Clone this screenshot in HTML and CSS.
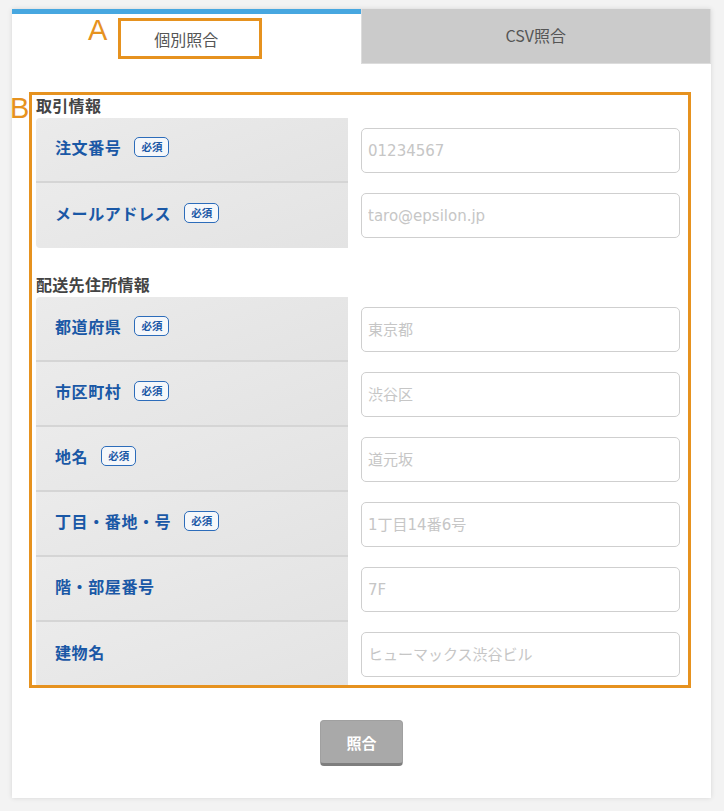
FILE: index.html
```html
<!DOCTYPE html>
<html lang="ja">
<head>
  <meta charset="UTF-8">
  <meta name="viewport" content="width=device-width, initial-scale=1.0">
  <title>照合</title>
  <link rel="stylesheet" href="styles.css">
</head>
<body>
  <div class="card">
    <div class="tabs">
      <div class="tab active">個別照合</div>
      <div class="tab">CSV照合</div>
    </div>

    <div class="content">
      <h2>取引情報</h2>
      <div class="form-table">
        <div class="row">
          <div class="label">注文番号<span class="req">必須</span></div>
          <div class="field"><input type="text" placeholder="01234567"></div>
        </div>
        <div class="row">
          <div class="label">メールアドレス<span class="req">必須</span></div>
          <div class="field"><input type="text" placeholder="taro@epsilon.jp"></div>
        </div>
      </div>

      <h2>配送先住所情報</h2>
      <div class="form-table">
        <div class="row">
          <div class="label">都道府県<span class="req">必須</span></div>
          <div class="field"><input type="text" placeholder="東京都"></div>
        </div>
        <div class="row">
          <div class="label">市区町村<span class="req">必須</span></div>
          <div class="field"><input type="text" placeholder="渋谷区"></div>
        </div>
        <div class="row">
          <div class="label">地名<span class="req">必須</span></div>
          <div class="field"><input type="text" placeholder="道元坂"></div>
        </div>
        <div class="row">
          <div class="label">丁目・番地・号<span class="req">必須</span></div>
          <div class="field"><input type="text" placeholder="1丁目14番6号"></div>
        </div>
        <div class="row">
          <div class="label">階・部屋番号</div>
          <div class="field"><input type="text" placeholder="7F"></div>
        </div>
        <div class="row">
          <div class="label">建物名</div>
          <div class="field"><input type="text" placeholder="ヒューマックス渋谷ビル"></div>
        </div>
      </div>

      <div class="actions">
        <button class="submit">照合</button>
      </div>
    </div>
  </div>

  <!-- annotation marks -->
  <div class="mark mark-a"></div>
  <span class="mark-label label-a">A</span>
  <div class="mark mark-b"></div>
  <span class="mark-label label-b">B</span>
</body>
</html>
```

FILE: styles.css
```css
body {
  margin: 0;
  padding: 9px 12px 13px;
  background: #f3f3f3;
  font-family: "Noto Sans CJK JP", "Noto Sans", sans-serif;
  color: #333;
}
.card {
  width: 699px;
  background: #fff;
  box-shadow: 0 0 5px rgba(0,0,0,0.12);
}
.tabs {
  display: flex;
  height: 55px;
}
.tab {
  flex: 1;
  display: flex;
  align-items: center;
  justify-content: center;
  font-size: 16px;
  color: #555;
  background: #cbcbcb;
  border: 1px solid #dcdcdc;
  border-top: none;
  padding-bottom: 2px;
  box-sizing: border-box;
}
.tab.active {
  background: #fff;
  border: none;
  border-top: 5px solid #47a7e0;
  padding-bottom: 0;
}
.content {
  padding: 0 31px 32px 24px;
}
h2 {
  font-size: 16px;
  line-height: 20px;
  font-weight: bold;
  color: #444;
  letter-spacing: 0.3px;
  margin: 31px 0 3px;
}
.form-table + h2 {
  margin-top: 26px;
}
.form-table {
  display: grid;
  grid-template-columns: 312px 1fr;
}
.row {
  display: contents;
}
.label {
  height: 65px;
  box-sizing: border-box;
  display: flex;
  align-items: center;
  padding: 0 0 6px 19px;
  font-size: 16px;
  font-weight: bold;
  letter-spacing: 0.6px;
  color: #1a58a6;
  background: linear-gradient(160deg, #ebebeb, #e3e3e3);
  border-bottom: 2px solid #d5d5d5;
}
.row:first-child .label {
  border-top-left-radius: 4px;
}
.row:last-child .label {
  border-bottom: none;
  border-bottom-left-radius: 4px;
}
.req {
  display: inline-block;
  margin-left: 13px;
  padding: 2px 6px;
  font-size: 10.5px;
  line-height: 14px;
  letter-spacing: 0;
  color: #1a58a6;
  background: #f5f7fa;
  border: 1.5px solid #2c6cba;
  border-radius: 5px;
}
.field {
  height: 65px;
  display: flex;
  align-items: center;
  padding-left: 13px;
}
.field input {
  width: 100%;
  height: 45px;
  box-sizing: border-box;
  border: 1px solid #cfcfcf;
  border-radius: 5px;
  padding: 0 6px;
  font-family: "DejaVu Sans", "Noto Sans CJK JP", sans-serif;
  font-size: 15px;
  color: #333;
  background: #fff;
}
.field input::placeholder {
  color: #c6c6c6;
}
.actions {
  display: flex;
  justify-content: center;
  margin-top: 33px;
}
.submit {
  width: 83px;
  height: 46px;
  margin-left: 7px;
  background: #a9a9a9;
  color: #fff;
  font-family: "Noto Sans CJK JP", sans-serif;
  font-size: 15px;
  font-weight: bold;
  border: 1px solid #a0a0a0;
  border-bottom: 3px solid #7e7e7e;
  border-radius: 4px;
}

/* annotation overlay */
.mark {
  position: absolute;
  border: 3px solid #e6921f;
  box-sizing: border-box;
}
.mark-a {
  left: 118px;
  top: 18px;
  width: 144px;
  height: 41px;
}
.mark-b {
  left: 29px;
  top: 92px;
  width: 662px;
  height: 596px;
}
.mark-label {
  position: absolute;
  font-family: "Liberation Sans", sans-serif;
  font-size: 29px;
  line-height: 1;
  color: #e6921f;
}
.label-a {
  left: 88px;
  top: 16px;
}
.label-b {
  left: 10px;
  top: 94px;
}
```
